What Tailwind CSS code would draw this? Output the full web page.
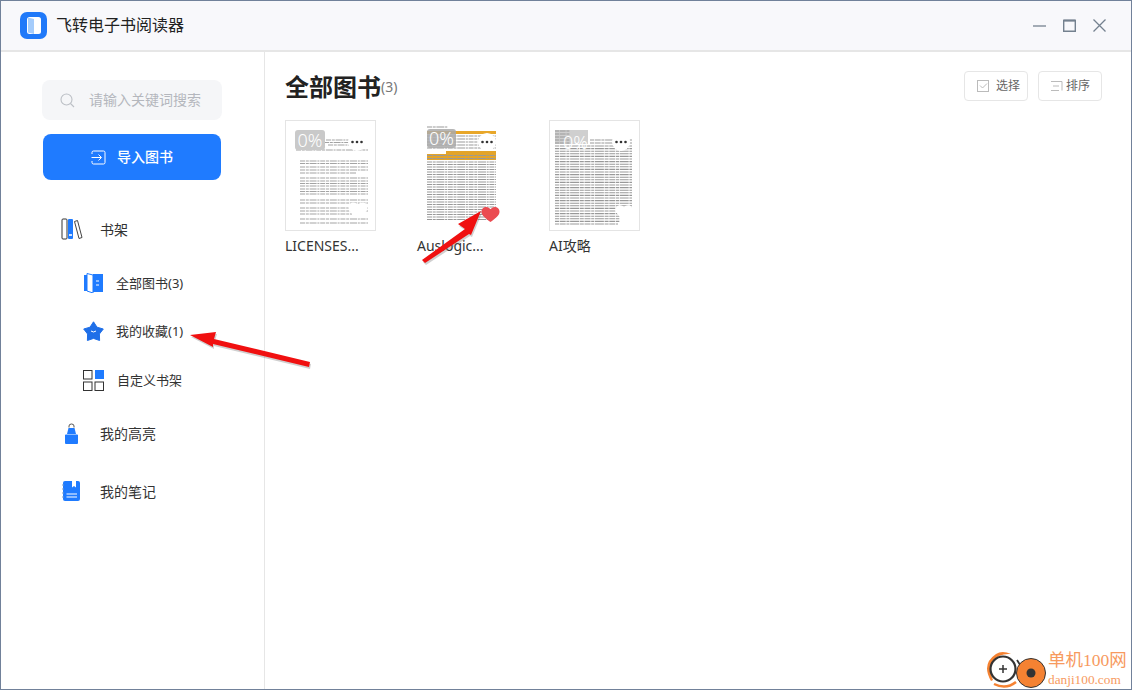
<!DOCTYPE html>
<html lang="zh-CN">
<head>
  <meta charset="UTF-8">
  <meta name="viewport" content="width=device-width, initial-scale=1.0">
  <script src="https://cdn.jsdelivr.net/npm/@tailwindcss/browser@4"></script>
  <title>飞转电子书阅读器</title>
</head>
<body class="bg-white">
  <div class="relative w-[1132px] h-[690px] overflow-hidden border border-[#71819a] bg-white text-[#333] font-['Noto_Sans','Noto_Sans_CJK_SC',sans-serif]">
    <!-- 标题栏 -->
    <header class="flex items-center h-[51px] bg-[#f8f8fb] border-b-2 border-[#e6e6e6] pl-[19px] pr-[25px]">
      <svg class="w-[27px] h-[27px]" viewBox="0 0 27 27">
        <rect width="27" height="27" rx="7" fill="#2079f9"/>
        <rect x="7" y="5" width="14" height="17" rx="2.5" fill="#fff"/>
        <path d="M8 5.5 L14 7 V22 L8 20.5Z" fill="#a5ccfb"/>
      </svg>
      <span class="ml-[9px] pb-[2px] text-[16px] text-[#222]">飞转电子书阅读器</span>
      <div class="ml-auto flex items-center gap-[17px]">
        <svg class="w-[13px] h-[13px]" viewBox="0 0 13 13"><path d="M0 7H13" stroke="#74818f" stroke-width="1.3" fill="none"/></svg>
        <svg class="w-[13px] h-[13px]" viewBox="0 0 13 13"><path d="M0.7 1.500H12.300V12.300H0.700Z" stroke="#74818f" stroke-width="1.4" fill="none"/><path d="M0.500 1.500H12.500" stroke="#74818f" stroke-width="2" fill="none"/></svg>
        <svg class="w-[13px] h-[13px]" viewBox="0 0 13 13"><path d="M0.500 0.500L12.500 12.500M12.500 0.500L0.500 12.500" stroke="#74818f" stroke-width="1.300" fill="none"/></svg>
      </div>
    </header>

    <div class="flex h-[637px]">
      <!-- 侧边栏 -->
      <aside class="w-[264px] shrink-0 border-r border-[#e6e6e6] pt-[28px] pl-[41px]">
        <div class="flex items-center w-[180px] h-[40px] rounded-[8px] bg-[#f5f6f8] pl-[18px]">
          <svg class="w-[15px] h-[15px]" viewBox="0 0 15 15" fill="none"><circle cx="6.5" cy="6.5" r="5.5" stroke="#bcc0c6" stroke-width="1.1"/><path d="M10.5 10.5L14 14" stroke="#bcc0c6" stroke-width="1.1"/></svg>
          <span class="ml-[14px] pb-[2px] text-[14px] text-[#b4b7bd]">请输入关键词搜索</span>
        </div>
        <button class="flex items-center justify-center ml-[1px] mt-[14px] w-[178px] h-[46px] rounded-[8px] bg-[#1f7bff] text-white text-[14px] font-medium">
          <svg class="w-[15px] h-[15px] mr-[11px]" viewBox="0 0 15 15" fill="none" stroke="#fff" stroke-width="1"><path d="M1 4V2.5Q1 1 2.5 1H12.500Q14 1 14 2.500V12.500Q14 14 12.500 14H2.500Q1 14 1 12.500V11"/><path d="M0.500 7.500H10M7.500 4.500L10.500 7.500L7.500 10.500"/></svg>
          <span class="pb-[2px]">导入图书</span>
        </button>

        <nav class="text-[14px] text-[#333] -ml-[41px]">
          <div class="flex items-center h-8 mt-[33px] pl-[60px]">
            <svg class="w-[22px] h-[22px]" viewBox="0 0 22 22" fill="none">
              <rect x="1" y="1" width="5" height="20" rx="1" stroke="#333" stroke-width="1"/>
              <rect x="7" y="1" width="5" height="20" rx="1" fill="#1f7bff"/>
              <rect x="8" y="16" width="3" height="2" fill="#cfe2ff"/>
              <path d="M13.500 3.500L16.500 2.500L21 19.500L18 20.500Z" stroke="#444" stroke-width="1"/>
            </svg>
            <span class="ml-[17px]">书架</span>
          </div>
          <div class="flex items-center h-8 mt-[23px] pl-[82px] text-[13px]">
            <svg class="w-[20px] h-[20px] ml-[1px] -translate-y-px" viewBox="0 0 20 20">
              <path d="M0 2H3V18H0Z" fill="#1f7bff"/>
              <rect x="9" y="1" width="10" height="18" fill="#1f7bff"/>
              <path d="M3 0.500L9 2V20L3 18Z" fill="#fff" stroke="#1f7bff" stroke-width="1"/>
              <path d="M12 8H15M12 12H15" stroke="#fff" stroke-width="1"/>
            </svg>
            <span class="ml-[12px]">全部图书(3)</span>
          </div>
          <div class="flex items-center h-8 mt-[16px] pl-[82px] text-[13px]">
            <svg class="w-[21px] h-[21px] -translate-y-px" viewBox="0 0 21 21">
              <path d="M10.500 0.800L14 6.200L20.300 8L16.400 13L16.600 19.500L10.500 17.400L4.400 19.500L4.600 13L0.700 8L7 6.200Z" fill="#1f6fe8" stroke="#1f6fe8" stroke-width="1" stroke-linejoin="round"/>
              <path d="M8 10Q10.500 12 13 10" stroke="#fff" stroke-width="1" fill="none"/>
            </svg>
            <span class="ml-[12px]">我的收藏(1)</span>
          </div>
          <div class="flex items-center h-8 mt-[17px] pl-[82px] text-[13px]">
            <svg class="w-[21px] h-[21px] -translate-y-px" viewBox="0 0 21 21" fill="none" stroke="#333" stroke-width="1">
              <rect x="0.500" y="0.500" width="8.500" height="8.500"/>
              <rect x="12" y="0" width="9" height="9" fill="#1f7bff" stroke="none"/>
              <rect x="0.500" y="12" width="8.500" height="8.500"/>
              <rect x="12" y="12" width="8.500" height="8.500"/>
            </svg>
            <span class="ml-[13px]">自定义书架</span>
          </div>
          <div class="flex items-center h-8 mt-[20px] pl-[63px]">
            <svg class="w-[15px] h-[21px]" viewBox="0 0 15 21">
              <path d="M5 4.500V3Q5 1 7.500 1T10 3V4.500" stroke="#555" stroke-width="1" fill="#fff"/>
              <path d="M4.500 5H10.500L12 11H3Z" fill="#1f7bff"/>
              <path d="M1 12Q1 11.500 2 11.500H13Q14 11.500 14 12V20Q14 21 13 21H2Q1 21 1 20Z" fill="#1f7bff"/>
            </svg>
            <span class="ml-[21px]">我的高亮</span>
          </div>
          <div class="flex items-center h-8 mt-[26px] pl-[61px]">
            <svg class="w-[18px] h-[20px]" viewBox="0 0 18 20">
              <rect x="1" y="0" width="17" height="20" rx="2" fill="#1f7bff"/>
              <path d="M0 4H2M0 8H2M0 12H2M0 16H2" stroke="#7a9cc8" stroke-width="1"/>
              <path d="M10 0H14V6.500L12 5L10 6.500Z" fill="#fff"/>
              <path d="M4.500 13H15M4.500 16H15" stroke="#fff" stroke-width="1"/>
            </svg>
            <span class="ml-[20px]">我的笔记</span>
          </div>
        </nav>
      </aside>

      <!-- 主内容 -->
      <main class="flex-1 pl-[20px] pr-[29px]">
        <div class="flex items-center h-[68px] pt-[1px]">
          <h1 class="text-[24px] font-bold text-[#222] leading-none">全部图书</h1>
          <span class="text-[14px] text-[#777]">(3)</span>
          <div class="ml-auto flex gap-[10px] mt-[-2px] text-[12px] text-[#666]">
            <button class="flex items-center w-[64px] h-[30px] rounded-[4px] border border-[#e6e6e6] pl-[12px]">
              <svg class="w-[12px] h-[12px] mr-[7px]" viewBox="0 0 12 12" fill="none" stroke="#bbb" stroke-width="1"><rect x="0.500" y="0.500" width="11" height="11"/><path d="M3 5.500L5.500 8L10 3.500"/></svg>
              选择
            </button>
            <button class="flex items-center w-[64px] h-[30px] rounded-[4px] border border-[#e6e6e6] pl-[12px]">
              <svg class="w-[12px] h-[12px] mr-[3px]" viewBox="0 0 12 12" fill="none" stroke="#bbb" stroke-width="1"><path d="M0 1.500H11M2 6H8M0 10.500H8M11 1.500V10.500"/></svg>
              排序
            </button>
          </div>
        </div>

        <div class="flex gap-[41px]">
          <!-- LICENSES -->
          <div class="w-[91px]">
            <div class="relative w-[91px] h-[111px] border border-[#e4e4e4] bg-white overflow-hidden">
              <svg class="absolute inset-0" width="89" height="109" viewBox="0 0 89 109" fill="none" stroke="#a3a3a3" stroke-width="1.100" stroke-dasharray="5 0.800 3 0.800 7 0.800 2 0.800">
                <path d="M40 19H70M38 21.500H72M42 24H68M10 29H82"/>
                <path d="M14 40H82M14 42.500H82M14 46H82M14 49H82M14 52H70M14 57H82M14 60H82M14 62.500H82M14 65H82M14 68H82M14 70.500H82M14 73H82M14 79H82M14 82H82M14 87H82M14 90H82M14 93H66M14 98H82M14 102H82"/>
              </svg>
              <div class="absolute left-[9px] top-[9px] w-[30px] h-[20px] rounded-[3px] bg-[#c9c9c9] text-white text-[18px] font-light leading-[20px] text-center">0%</div>
              <svg class="absolute left-[62px] top-[12px]" width="18" height="18" viewBox="0 0 18 18"><circle cx="9" cy="9" r="9" fill="#fff"/><circle cx="4.500" cy="9" r="1.300" fill="#333"/><circle cx="9" cy="9" r="1.300" fill="#333"/><circle cx="13.500" cy="9" r="1.300" fill="#333"/></svg>
              <svg class="absolute left-[62px] top-[81px]" width="20" height="17" viewBox="0 0 20 17"><path d="M10 16.500C6 13 0.500 10 0.500 5.500C0.500 2.500 2.800 0.500 5.500 0.500C7.500 0.500 9 1.500 10 3C11 1.500 12.500 0.500 14.500 0.500C17.200 0.500 19.500 2.500 19.500 5.500C19.500 10 14 13 10 16.500Z" fill="#fff"/></svg>
            </div>
            <p class="mt-[4px] text-[14px] text-[#333]">LICENSES...</p>
          </div>
          <!-- Auslogics -->
          <div class="w-[91px]">
            <div class="relative w-[91px] h-[111px] border border-white bg-white overflow-hidden">
              <svg class="absolute inset-0" width="89" height="109" viewBox="0 0 89 109" fill="none">
                <rect x="9" y="10" width="69" height="3" fill="#e8a72a"/>
                <rect x="28" y="30" width="50" height="3" fill="#e3a42a"/>
                <rect x="9" y="33" width="69" height="6" fill="#e3a42a"/>
                <g stroke="#999" stroke-width="1.100" stroke-dasharray="5 0.700 3 0.700 8 0.700 2 0.700">
                  <path d="M9 6H30M9 15H78M9 18H78M9 21H78M9 24H78M9 27H78M9 34.500H78M9 37.500H78M9 41H78M9 43.500H78M9 46H78M9 48.500H78M9 51H78M9 53.500H78M9 56H78M9 58.500H78M9 61H78M9 63.500H78M9 66H78M9 68.500H78M9 71H78M9 73.500H78M9 76H78M9 78.500H78M9 81H78M9 83.500H78M9 86H78M9 88.500H78M9 91H78M9 93.500H78M9 96H78M9 98.500H70"/>
                </g>
              </svg>
              <div class="absolute left-[9px] top-[8px] w-[29px] h-[19px] rounded-[3px] bg-[#a9a9a9]/85 text-white text-[18px] font-light leading-[19px] text-center">0%</div>
              <svg class="absolute left-[60px] top-[12px]" width="18" height="18" viewBox="0 0 18 18"><circle cx="9" cy="9" r="9" fill="#fff"/><circle cx="4.500" cy="9" r="1.300" fill="#333"/><circle cx="9" cy="9" r="1.300" fill="#333"/><circle cx="13.500" cy="9" r="1.300" fill="#333"/></svg>
              <svg class="absolute left-[63px] top-[85px]" width="19" height="17" viewBox="0 0 20 17"><path d="M10 16.500C6 13 0.500 10 0.500 5.500C0.500 2.500 2.800 0.500 5.500 0.500C7.500 0.500 9 1.500 10 3C11 1.500 12.500 0.500 14.500 0.500C17.200 0.500 19.500 2.500 19.500 5.500C19.500 10 14 13 10 16.500Z" fill="#eb4b51"/></svg>
            </div>
            <p class="mt-[4px] text-[14px] text-[#333]">Auslogic...</p>
          </div>
          <!-- AI攻略 -->
          <div class="w-[91px]">
            <div class="relative w-[91px] h-[111px] border border-[#e4e4e4] bg-white overflow-hidden">
              <svg class="absolute inset-0" width="89" height="109" viewBox="0 0 89 109" fill="none">
                <rect x="5" y="9" width="33" height="14" fill="#cfcfcf"/>
                <g stroke="#999" stroke-width="1.100" stroke-dasharray="4 0.700 6 0.700 3 0.700 9 0.700">
                  <path d="M5 10H20M5 13H20M5 16H20M5 19H20M5 22H20M40 19H82M40 22H82M5 25H82M5 27.600H82M5 30.200H82M5 32.800H82M5 35.400H82M5 38H82M5 40.600H82M5 43.200H82M5 45.800H82M5 48.400H82M5 51H82M5 53.600H82M5 56.200H82M5 58.800H82M5 61.400H82M5 64H82M5 66.600H82M5 69.200H82M5 71.800H82M5 74.400H82M5 77H82M5 79.600H82M5 82.200H82M5 84.800H82M5 87.400H82M5 90H82M5 92.600H70M5 95.200H70M5 97.800H70M5 100.400H70M5 103H68"/>
                </g>
              </svg>
              <div class="absolute left-[9px] top-[11px] w-[33px] h-[20px] text-white text-[18px] font-light leading-[20px] text-center">0%</div>
              <svg class="absolute left-[62px] top-[12px]" width="18" height="18" viewBox="0 0 18 18"><circle cx="9" cy="9" r="9" fill="#fff"/><circle cx="4.500" cy="9" r="1.300" fill="#333"/><circle cx="9" cy="9" r="1.300" fill="#333"/><circle cx="13.500" cy="9" r="1.300" fill="#333"/></svg>
              <svg class="absolute left-[65px] top-[83px]" width="18" height="17" viewBox="0 0 20 17"><path d="M10 16.500C6 13 0.500 10 0.500 5.500C0.500 2.500 2.800 0.500 5.500 0.500C7.500 0.500 9 1.500 10 3C11 1.500 12.500 0.500 14.500 0.500C17.200 0.500 19.500 2.500 19.500 5.500C19.500 10 14 13 10 16.500Z" fill="#fff"/></svg>
            </div>
            <p class="mt-[4px] text-[14px] text-[#333]">AI攻略</p>
          </div>
        </div>
      </main>
    </div>

    <!-- 标注箭头 -->
    <svg class="absolute left-[-1px] top-[-1px] pointer-events-none" width="1132" height="690" fill="#f01010">
      <path d="M190 335L216 332L214 339L310 362L309 367L213 344L213 347Z" fill="#777" opacity="0.35" transform="translate(1 2)"/>
      <path d="M190 335L216 332L214 339L310 362L309 367L213 344L213 347Z"/>
      <path d="M481 211L458 224L465 229L422 260L425 263L469 234L471 235Z" fill="#777" opacity="0.35" transform="translate(1 2)"/>
      <path d="M481 211L458 224L465 229L422 260L425 263L469 234L471 235Z"/>
    </svg>

    <!-- 水印 -->
    <div class="absolute left-[983px] top-[647px] flex items-start">
      <svg width="63" height="42" viewBox="0 0 63 42" fill="none">
        <path d="M7 33Q-3 16 12 6Q18 2 27 6Q15 5 9 13Q4 22 9 32Z" fill="#f58232"/>
        <circle cx="19" cy="21" r="12.500" stroke="#333" stroke-width="2.200" fill="#fff"/>
        <path d="M19 17V25M15 21H23" stroke="#333" stroke-width="1.500"/>
        <path d="M10 36Q22 42 32 34" stroke="#f58232" stroke-width="2.500"/>
        <path d="M33 12L38 20" stroke="#333" stroke-width="1.800"/>
        <circle cx="47" cy="25" r="14.500" fill="#f58232" stroke="#333" stroke-width="1"/>
        <circle cx="47" cy="25" r="4.500" fill="#333"/>
      </svg>
      <div class="ml-[1px] mt-[4px] font-['Liberation_Serif','Noto_Sans_CJK_SC',serif] text-[#f79a5e] leading-none">
        <div class="text-[17.5px]">单机100网</div>
        <div class="text-[13.300px] mt-[3px]">danji100.com</div>
      </div>
    </div>
  </div>
</body>
</html>
